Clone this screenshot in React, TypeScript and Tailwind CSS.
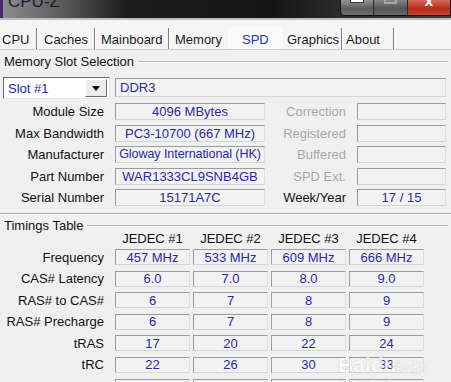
import React from "react";
import clsx from "clsx";

const memRows = [
  { label: "Module Size", value: "4096 MBytes", rLabel: "Correction", rValue: "", rActive: false },
  { label: "Max Bandwidth", value: "PC3-10700 (667 MHz)", rLabel: "Registered", rValue: "", rActive: false },
  { label: "Manufacturer", value: "Gloway International (HK)", rLabel: "Buffered", rValue: "", rActive: false },
  { label: "Part Number", value: "WAR1333CL9SNB4GB", rLabel: "SPD Ext.", rValue: "", rActive: false },
  { label: "Serial Number", value: "15171A7C", rLabel: "Week/Year", rValue: "17 / 15", rActive: true },
];

const timings: [string, string[]][] = [
  ["Frequency", ["457 MHz", "533 MHz", "609 MHz", "666 MHz"]],
  ["CAS# Latency", ["6.0", "7.0", "8.0", "9.0"]],
  ["RAS# to CAS#", ["6", "7", "8", "9"]],
  ["RAS# Precharge", ["6", "7", "8", "9"]],
  ["tRAS", ["17", "20", "22", "24"]],
  ["tRC", ["22", "26", "30", "33"]],
  ["Command Rate", ["", "", "", ""]],
];

const tabs = [
  { name: "CPU", w: "w-[38px]", pad: "pl-[2px]" },
  { name: "Caches", w: "w-[58px]", pad: "pl-[6px]" },
  { name: "Mainboard", w: "w-[74px]", pad: "pl-[5px]" },
  { name: "Memory", w: "w-[58px]", pad: "pl-[5px]", noSep: true },
  { name: "SPD", w: "w-[55px]", pad: "pl-[14px]", active: true },
  { name: "Graphics", w: "w-[60px]", pad: "pl-[4px]" },
  { name: "About", w: "w-[52px]", pad: "pl-[3px]" },
];

function Field({ children, className }: { children?: React.ReactNode; className?: string }) {
  return (
    <div
      className={clsx(
        "flex items-center justify-center overflow-hidden whitespace-nowrap leading-none text-[#2a2aa5] bg-[#f2f2f2]",
        "border border-t-[#9c9c9c] border-l-[#9c9c9c] border-r-[#dedede] border-b-[#d4d4d4]",
        className
      )}
    >
      {children}
    </div>
  );
}

function GroupHeader({ title }: { title: string }) {
  return (
    <div className="flex items-center h-[13px] pl-[4px] pr-[3px]">
      <span className="leading-none text-[#111] pr-[4px]">{title}</span>
      <div className="flex-1 flex flex-col">
        <div className="h-px bg-[#b4b4b4]" />
        <div className="h-px bg-white" />
      </div>
    </div>
  );
}

function TitleBar() {
  return (
    <div className="flex h-[20px] overflow-hidden bg-[linear-gradient(90deg,#8e8e8e_0%,#6a6a6a_10%,#1c1c1c_28%,#141414_60%,#2a2a2a_75%,#3c3c3c_100%)] border-b-2 border-[#bdbdbd]">
      <div className="w-[3px] bg-[#4b2570]" />
      <span className="ml-[5px] -mt-[7px] text-[17px] leading-none text-[#1b1b35] font-['Liberation_Sans',sans-serif]">CPU-Z</span>
      <div className="ml-auto flex h-[17px] -mt-px rounded-bl-[5px] overflow-hidden border border-[#111] border-t-0">
        <div className="w-[33px] flex justify-center border-r border-[#2a2a2a] bg-[linear-gradient(180deg,#9a9a9a,#5c5c5c_60%,#6e6e6e)]">
          <div className="w-[14px] h-[4px] bg-white border border-[#333] border-t-0" />
        </div>
        <div className="w-[34px] flex justify-center border-r border-[#2a2a2a] bg-[linear-gradient(180deg,#8a8a8a,#555_60%,#676767)]">
          <div className="w-[13px] h-[5px] border-2 border-t-0 border-[#a8a8a8]" />
        </div>
        <div className="w-[42px] flex justify-center bg-[linear-gradient(180deg,#d8705f,#b52d1b_60%,#c9422c)]">
          <span className="text-white text-[15px] font-bold leading-none -mt-[6px]">x</span>
        </div>
      </div>
    </div>
  );
}

export default function App() {
  return (
    <div className="relative w-[451px] h-[382px] overflow-hidden bg-[#f0f0f0] text-[13px] text-[#111] font-['Liberation_Sans',Arial,sans-serif]">
      <TitleBar />

      {/* tabs */}
      <div className="flex h-[30px] bg-[#f5f5f5] border-b border-[#cfcfcf]">
        {tabs.map((t) => (
          <div
            key={t.name}
            className={clsx(
              "flex items-end pb-[3px] shrink-0",
              t.w,
              t.pad,
              t.active ? "bg-[#fafafa] text-[#2233d0] mt-[6px]" : "text-[#1a1a1a]"
            )}
          >
            <span className="leading-none">{t.name}</span>
            {!t.active && !t.noSep && (
              <div className="ml-auto h-[21px] flex -mb-[3px]">
                <div className="w-px bg-[#7e7e7e]" />
                <div className="w-px bg-white" />
              </div>
            )}
          </div>
        ))}
        <div className="flex-1" />
      </div>

      {/* memory slot selection */}
      <div className="pt-[5px]">
        <GroupHeader title="Memory Slot Selection" />
        <div className="flex items-start mt-[9px] pl-[3px] pr-[5px]">
          <div className="w-[107px] h-[22px] flex items-center bg-white border border-t-[#6a6a6a] border-l-[#6a6a6a] border-r-[#e6e6e6] border-b-[#e6e6e6]">
            <span className="pl-[4px] text-[#2424b0] leading-none">Slot #1</span>
            <div className="ml-auto mr-[2px] w-[22px] h-[18px] flex items-center justify-center bg-[#ececec] border border-t-white border-l-white border-r-[#6f6f6f] border-b-[#6f6f6f]">
              <svg width="8" height="5" viewBox="0 0 8 5">
                <path d="M0 0h8L4 5z" fill="#111" />
              </svg>
            </div>
          </div>
          <Field className="flex-1 ml-[5px] mt-px h-[19px] !justify-start pl-[4px]">DDR3</Field>
        </div>

        <div className="flex flex-col gap-[4.5px] mt-[4px]">
          {memRows.map((r) => (
            <div key={r.label} className="flex items-center h-[17px]">
              <span className="w-[104px] text-right leading-none">{r.label}</span>
              <Field className={clsx("ml-[11px] w-[150px] h-[17px]", r.label === "Manufacturer" && "text-[12.6px] tracking-[-0.1px]")}>
                {r.value}
              </Field>
              <span className={clsx("w-[81px] text-right leading-none", r.rActive ? "text-[#111]" : "text-[#a9a9a9]")}>
                {r.rLabel}
              </span>
              <Field className="ml-[11px] w-[89px] h-[17px]">{r.rValue}</Field>
            </div>
          ))}
        </div>

        <div className="mt-[7px] flex flex-col">
          <div className="h-px bg-[#a8a8a8]" />
          <div className="h-px bg-white" />
        </div>
      </div>

      {/* timings */}
      <div className="pt-[4px]">
        <GroupHeader title="Timings Table" />
        <div className="flex h-[12px] items-center">
          <div className="w-[115px]" />
          {["JEDEC #1", "JEDEC #2", "JEDEC #3", "JEDEC #4"].map((j) => (
            <span key={j} className="w-[75px] mr-[3px] text-center leading-none">
              {j}
            </span>
          ))}
        </div>
        <div className="flex flex-col gap-[5.6px] mt-[5px]">
          {timings.map(([label, vals]) => (
            <div key={label} className="flex items-center h-[16px]">
              <span className="w-[104px] text-right leading-none">{label}</span>
              <div className="ml-[11px] flex gap-[3px]">
                {vals.map((v, i) => (
                  <Field key={i} className="w-[75px] h-[16px]">
                    {v}
                  </Field>
                ))}
              </div>
            </div>
          ))}
        </div>
      </div>

      {/* watermark */}
      <div className="absolute left-[338px] top-[354px] flex flex-col items-start opacity-60 pointer-events-none">
        <span className="text-[21px] font-bold leading-none text-white [text-shadow:0_0_1px_#9a9a9a]">
          Baidu<span className="text-[15px] font-normal">经验</span>
        </span>
        <span className="text-[10px] leading-none text-white mt-[3px] [text-shadow:0_0_1px_#9a9a9a]">jingyan.baidu.com</span>
      </div>
    </div>
  );
}
